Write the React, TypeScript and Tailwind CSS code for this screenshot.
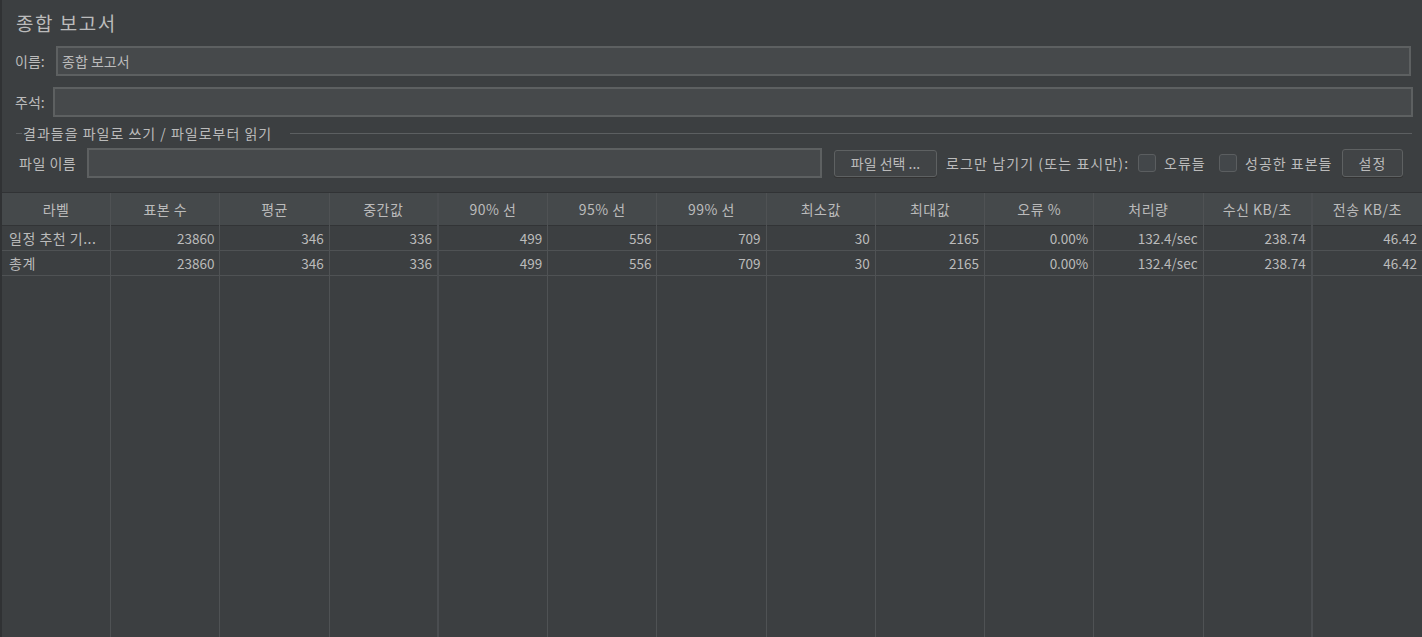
const FONT = "font-['Noto_Sans_CJK_KR','Noto_Sans',sans-serif]";

const columns = [
  { title: "라벨", values: ["일정 추천 기...", "총계"], left: true },
  { title: "표본 수", values: ["23860", "23860"] },
  { title: "평균", values: ["346", "346"] },
  { title: "중간값", values: ["336", "336"], thick: true },
  { title: "90% 선", values: ["499", "499"] },
  { title: "95% 선", values: ["556", "556"] },
  { title: "99% 선", values: ["709", "709"] },
  { title: "최소값", values: ["30", "30"] },
  { title: "최대값", values: ["2165", "2165"] },
  { title: "오류 %", values: ["0.00%", "0.00%"] },
  { title: "처리량", values: ["132.4/sec", "132.4/sec"] },
  { title: "수신 KB/초", values: ["238.74", "238.74"], thick: true },
  { title: "전송 KB/초", values: ["46.42", "46.42"] },
];

function Checkbox() {
  return (
    <div className="w-[18px] h-[18px] shrink-0 rounded-[3px] border border-[#5b5e60] bg-[#43474a]" />
  );
}

function SwingButton({ label, className }: { label: string; className: string }) {
  return (
    <button
      className={`shrink-0 rounded-[3px] border border-[#5e6162] bg-[#414446] text-[14px] text-[#bbbbbb] shadow-[0_1px_0_#333] ${className}`}
    >
      {label}
    </button>
  );
}

export default function App() {
  return (
    <div className={`h-screen w-full bg-[#3c3f41] text-[#bbbbbb] flex flex-col border-l-2 border-[#303234] overflow-hidden ${FONT}`}>
      {/* title */}
      <div className="h-[44px] flex items-center pl-[14px] text-[19px] tracking-[1.5px] leading-none">종합 보고서</div>

      {/* name */}
      <div className="flex items-center h-[30px] mt-[2px] pl-[13px] pr-[11px]">
        <span className="w-[41px] text-[14px]">이름:</span>
        <div className="flex-1 h-[30px] border-2 border-[#5d6061] bg-[#46494b] flex items-center px-[4px] text-[14px]">
          종합 보고서
        </div>
      </div>

      {/* comment */}
      <div className="flex items-center h-[30px] mt-[11px] pl-[13px] pr-[9px]">
        <span className="w-[38px] text-[14px]">주석:</span>
        <div className="flex-1 h-[30px] border-2 border-[#5d6061] bg-[#46494b]" />
      </div>

      {/* section */}
      <div className="flex items-center h-[20px] mt-[6px] pl-[14px] pr-[10px]">
        <div className="w-[6px] h-px bg-[#5c5f61]" />
        <span className="w-[268px] pl-[1px] text-[14px] tracking-[1px]">결과들을 파일로 쓰기 / 파일로부터 읽기</span>
        <div className="flex-1 h-px bg-[#5c5f61]" />
      </div>

      {/* file row */}
      <div className="flex items-center h-[30px] mt-[5px] pl-[17px] text-[14px]">
        <span className="w-[68px] tracking-[0.5px]">파일 이름</span>
        <div className="w-[735px] h-[30px] shrink-0 border-2 border-[#5d6061] bg-[#46494b]" />
        <SwingButton label="파일 선택 ..." className="ml-[12px] w-[103px] h-[27px]" />
        <span className="ml-[9px] w-[192px] shrink-0 tracking-[1.1px] whitespace-nowrap">로그만 남기기 (또는 표시만):</span>
        <Checkbox />
        <span className="ml-[8px] w-[55px] shrink-0 tracking-[1px]">오류들</span>
        <Checkbox />
        <span className="ml-[8px] w-[97px] shrink-0 tracking-[1px] whitespace-nowrap">성공한 표본들</span>
        <SwingButton label="설정" className="w-[61px] h-[28px] tracking-[1px]" />
      </div>

      {/* table */}
      <div className="mt-[14px] flex-1 grid grid-cols-[repeat(13,minmax(0,1fr))] border-t border-[#313335]">
        {columns.map((col, i) => (
          <div
            key={i}
            className={`flex flex-col ${i < 12 ? (col.thick ? "border-r-2 border-[#4a4d50]" : "border-r border-[#4f5254]") : ""}`}
          >
            <div className="h-[33px] bg-[#45494b] border-b border-[#323436] flex items-center justify-center text-[14px] tracking-[0.5px]">
              {col.title}
            </div>
            {col.values.map((v, j) => (
              <div
                key={j}
                className={`h-[25px] border-b border-[#4f5254] flex items-center ${col.left ? "justify-start pl-[7px] text-[14px] tracking-[0.5px]" : "justify-end pr-[5px] text-[13.5px]"}`}
              >
                {v}
              </div>
            ))}
            <div className="flex-1" />
          </div>
        ))}
      </div>
    </div>
  );
}
